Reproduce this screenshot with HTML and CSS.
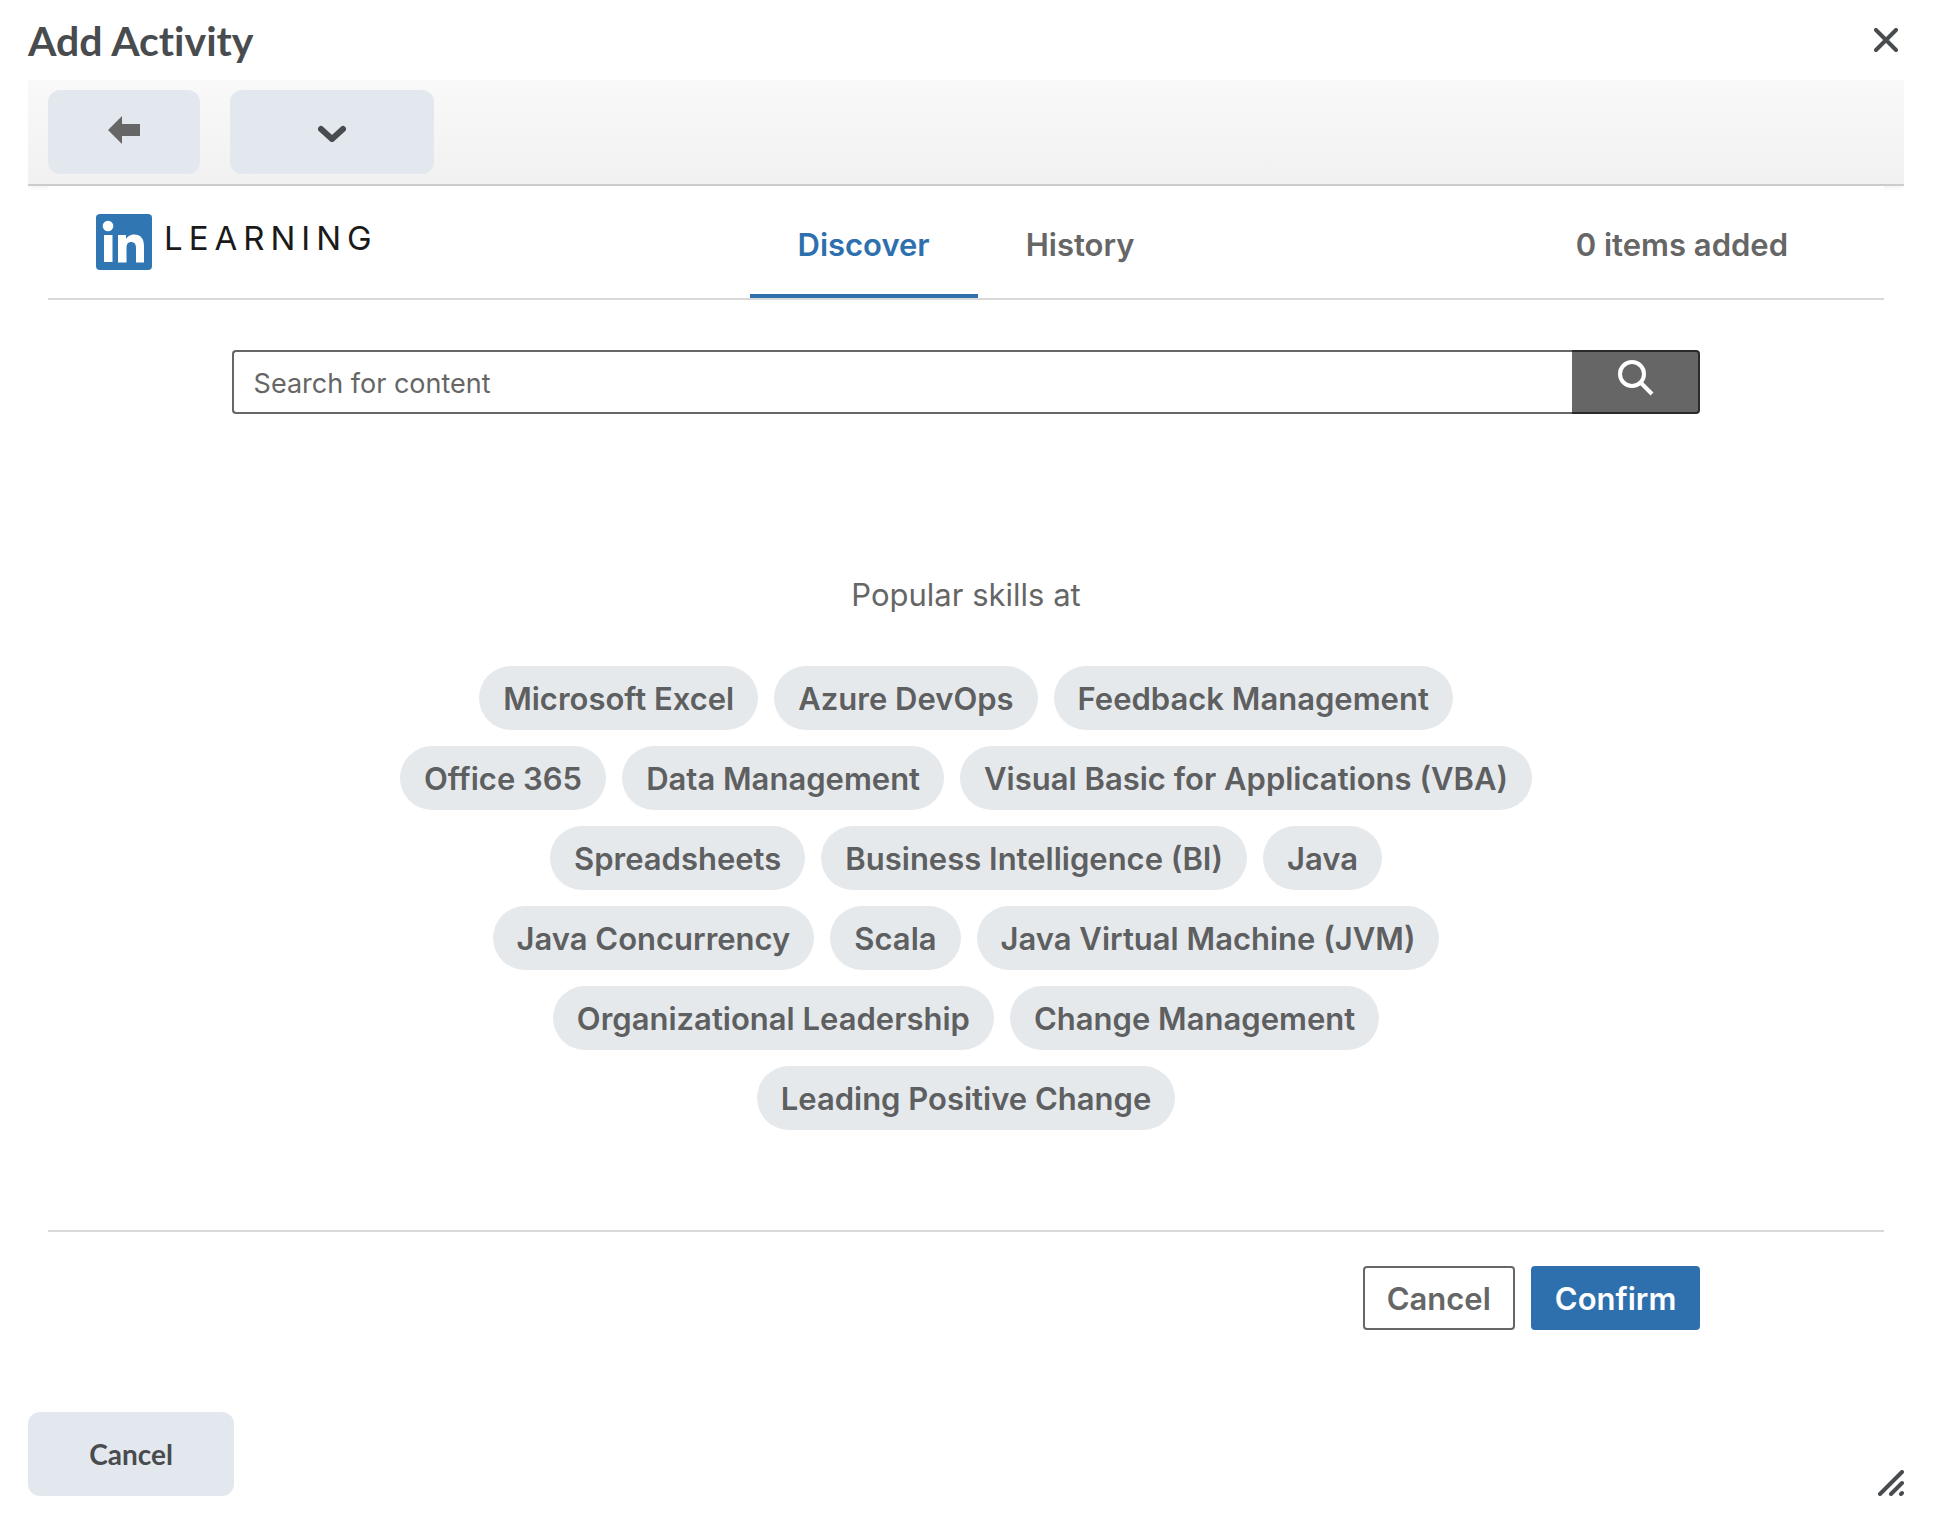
FILE: index.html
```html
<!DOCTYPE html>
<html lang="en">
<head>
<meta charset="utf-8">
<meta name="viewport" content="width=device-width, initial-scale=1">
<title>Add Activity</title>
<link rel="stylesheet" href="styles.css">
</head>
<body>
<div class="dialog" role="dialog" aria-labelledby="dialog-title">
  <header class="dialog-header">
    <h1 class="dialog-title" id="dialog-title">Add Activity</h1>
    <button class="close-button" type="button" aria-label="Close">
      <svg width="24" height="24" viewBox="0 0 24 24" fill="none" stroke="currentColor" stroke-width="4" stroke-linecap="round"><path d="M2 2L22 22M22 2L2 22"/></svg>
    </button>
  </header>

  <div class="toolbar">
    <button class="soft-button back-button" type="button" aria-label="Back">
      <svg width="32" height="32" viewBox="0 0 32 32" fill="#666"><path d="M0 14L14 0V8H32V20H14V28Z"/></svg>
    </button>
    <button class="soft-button menu-button" type="button" aria-label="More options">
      <svg width="28" height="20" viewBox="0 0 28 20" fill="none" stroke="currentColor" stroke-width="6" stroke-linecap="round" stroke-linejoin="round"><path d="M3 7L14 17L25 7"/></svg>
    </button>
  </div>

  <main class="picker">
    <div class="picker-header">
      <div class="brand">
        <svg class="brand-mark" width="56" height="56" viewBox="0 0 56 56" role="img" aria-label="LinkedIn">
          <rect width="56" height="56" rx="4" fill="#2f76b3"/>
          <g fill="#fff">
            <circle cx="12" cy="12" r="5.3"/>
            <path d="M8 21H16.5V48H8Z"/>
            <path d="M22 21H30V25C31 23 34 20.500 38 20.500C45 20.500 48 25 48 32V48.500H40V34C40 30 38.500 28 35.500 28C32 28 30.500 30 30.500 34V48.500H22Z"/>
          </g>
        </svg>
        <span class="brand-name">LEARNING</span>
      </div>
      <nav class="tabs">
        <a class="tab tab-active" href="#discover" aria-current="page">Discover</a>
        <a class="tab" href="#history">History</a>
      </nav>
      <p class="item-count">0 items added</p>
    </div>

    <form class="search" role="search">
      <input class="search-input" type="search" placeholder="Search for content" aria-label="Search for content">
      <button class="search-button" type="submit" aria-label="Search">
        <svg width="36" height="36" viewBox="0 0 36 36" fill="none" stroke="currentColor" stroke-width="4"><circle cx="14" cy="14" r="12"/><path d="M23 23L34 34"/></svg>
      </button>
    </form>

    <section class="skills">
      <h2 class="skills-title">Popular skills at</h2>
      <div class="skill-list">
        <button class="skill" type="button">Microsoft Excel</button>
        <button class="skill" type="button">Azure DevOps</button>
        <button class="skill" type="button">Feedback Management</button>
        <button class="skill" type="button">Office 365</button>
        <button class="skill" type="button">Data Management</button>
        <button class="skill" type="button">Visual Basic for Applications (VBA)</button>
        <button class="skill" type="button">Spreadsheets</button>
        <button class="skill" type="button">Business Intelligence (BI)</button>
        <button class="skill" type="button">Java</button>
        <button class="skill" type="button">Java Concurrency</button>
        <button class="skill" type="button">Scala</button>
        <button class="skill" type="button">Java Virtual Machine (JVM)</button>
        <button class="skill" type="button">Organizational Leadership</button>
        <button class="skill" type="button">Change Management</button>
        <button class="skill" type="button">Leading Positive Change</button>
      </div>
    </section>

    <div class="picker-footer">
      <div class="picker-actions">
        <button class="action" type="button">Cancel</button>
        <button class="action action-primary" type="button">Confirm</button>
      </div>
    </div>
  </main>

  <footer class="dialog-footer">
    <button class="soft-button cancel-button" type="button">Cancel</button>
    <svg class="resize-grip" width="26" height="26" viewBox="0 0 26 26" fill="none" stroke="currentColor" stroke-width="4" stroke-linecap="round"><path d="M2 24L24 2M13 24L24 13M23 24L24 23"/></svg>
  </footer>
</div>
</body>
</html>
```
FILE: styles.css
```css
* {
  box-sizing: border-box;
}

body {
  margin: 0;
  background: #fff;
  color: #494c4e;
  font-family: Inter, "Liberation Sans", sans-serif;
  font-size: 31px;
  line-height: 40px;
}

button,
input {
  margin: 0;
  padding: 0;
  border: 0;
  color: inherit;
  font: inherit;
}

button {
  cursor: pointer;
}

svg {
  display: block;
}

h1,
h2,
p {
  margin: 0;
}

.dialog {
  padding: 0 54px 30px 28px;
}

.dialog-header {
  display: flex;
  align-items: center;
  justify-content: space-between;
  height: 80px;
  padding-right: 6px;
}

.dialog-title {
  padding-top: 2px;
  font-family: Lato, sans-serif;
  font-size: 41px;
  font-variant-ligatures: none;
  font-weight: 700;
  line-height: 48px;
}

.close-button {
  background: none;
}

.toolbar {
  display: flex;
  gap: 30px;
  padding: 10px 20px;
  border-bottom: 2px solid #ccc;
  background: linear-gradient(#f9f9f9, #f1f1f1);
  box-shadow: 0 4px 4px -2px rgba(0, 0, 0, 0.06);
}

.soft-button {
  display: flex;
  align-items: center;
  justify-content: center;
  height: 84px;
  border-radius: 12px;
  background: #e3e8ef;
}

.back-button {
  width: 152px;
}

.menu-button {
  width: 204px;
}

.picker {
  margin: 0 20px;
  background: #fff;
  color: #666;
}

.picker-header {
  display: grid;
  grid-template-columns: 1fr auto 1fr;
  height: 114px;
  padding: 0 48px;
  border-bottom: 2px solid #d9d9d9;
}

.brand {
  display: flex;
  gap: 12px;
  padding-top: 28px;
}

.brand-name {
  padding-top: 4px;
  color: #1a1a1a;
  font-size: 33px;
  letter-spacing: 6px;
}

.tabs {
  display: flex;
}

.tab {
  padding: 39px 48px 0;
  border-bottom: 4px solid transparent;
  color: #666;
  font-weight: 600;
  text-decoration: none;
}

.tab-active {
  border-color: #2e70ad;
  color: #2e70ad;
}

.item-count {
  padding: 39px 48px 0 0;
  font-weight: 600;
  text-align: right;
}

.search {
  display: flex;
  width: 80%;
  height: 64px;
  margin: 50px auto 0;
}

.search-input {
  flex: 1;
  min-width: 0;
  padding: 4px 20px 0;
  border: 2px solid #666;
  border-right: 0;
  border-radius: 4px 0 0 4px;
  background: #fff;
  font-size: 27px;
  appearance: none;
}

.search-input::placeholder {
  color: #666;
  opacity: 1;
}

.search-button {
  display: flex;
  justify-content: center;
  width: 128px;
  padding: 8px 0 0 2px;
  border: 2px solid #2b2b2b;
  border-left: 0;
  border-radius: 0 4px 4px 0;
  background: #666;
  color: #fff;
}

.skills {
  padding: 161px 0 100px;
  text-align: center;
}

.skills-title {
  font-size: 31px;
  font-weight: 400;
}

.skill-list {
  display: flex;
  flex-wrap: wrap;
  justify-content: center;
  gap: 16px;
  max-width: 1152px;
  margin: 51px auto 0;
}

.skill {
  height: 64px;
  padding: 2px 24px 0;
  border-radius: 32px;
  background: #e6e9ec;
  color: #5e5f60;
  font-weight: 600;
  white-space: nowrap;
}

.picker-footer {
  border-top: 2px solid #d9d9d9;
}

.picker-actions {
  display: flex;
  justify-content: flex-end;
  gap: 16px;
  width: 80%;
  margin: 0 auto;
  padding: 34px 0 82px;
}

.action {
  height: 64px;
  padding: 2px 22px 0;
  border: 2px solid #666;
  border-radius: 4px;
  background: #fff;
  font-weight: 600;
}

.action-primary {
  border-color: #2e70ad;
  background: #2e70ad;
  color: #fff;
}

.dialog-footer {
  display: flex;
  align-items: flex-end;
  justify-content: space-between;
}

.cancel-button {
  min-width: 206px;
  padding: 0 60px;
  font-family: Lato, sans-serif;
  font-size: 28px;
  font-weight: 700;
}
```
